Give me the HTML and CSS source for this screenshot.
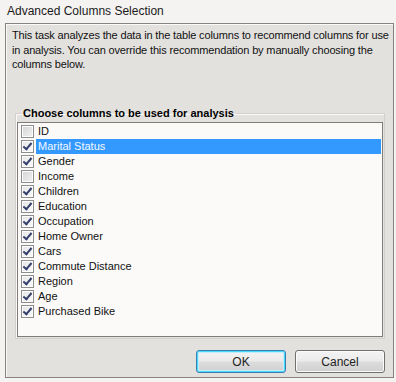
FILE: index.html
```html
<!DOCTYPE html>
<html>
<head>
<meta charset="utf-8">
<link rel="stylesheet" href="styles.css">
</head>
<body>
<div class="title">Advanced Columns Selection</div>
<div class="dialog">
  <p class="desc">This task analyzes the data in the table columns to recommend columns for use in analysis. You can override this recommendation by manually choosing the columns below.</p>
  <fieldset class="group">
    <legend>Choose columns to be used for analysis</legend>
    <ul class="list">
      <li class="item"><span class="cb"></span><span class="lbl">ID</span></li>
      <li class="item sel"><span class="cb on"></span><span class="lbl">Marital Status</span></li>
      <li class="item"><span class="cb on"></span><span class="lbl">Gender</span></li>
      <li class="item"><span class="cb"></span><span class="lbl">Income</span></li>
      <li class="item"><span class="cb on"></span><span class="lbl">Children</span></li>
      <li class="item"><span class="cb on"></span><span class="lbl">Education</span></li>
      <li class="item"><span class="cb on"></span><span class="lbl">Occupation</span></li>
      <li class="item"><span class="cb on"></span><span class="lbl">Home Owner</span></li>
      <li class="item"><span class="cb on"></span><span class="lbl">Cars</span></li>
      <li class="item"><span class="cb on"></span><span class="lbl">Commute Distance</span></li>
      <li class="item"><span class="cb on"></span><span class="lbl">Region</span></li>
      <li class="item"><span class="cb on"></span><span class="lbl">Age</span></li>
      <li class="item"><span class="cb on"></span><span class="lbl">Purchased Bike</span></li>
    </ul>
  </fieldset>
  <div class="buttons">
    <button class="btn default">OK</button>
    <button class="btn">Cancel</button>
  </div>
</div>
</body>
</html>
```
FILE: styles.css
```css
html, body {
  margin: 0;
  padding: 0;
}
body {
  width: 396px;
  height: 382px;
  background: #f4f3f2;
  font-family: "Liberation Sans", Arial, sans-serif;
  font-size: 11px;
  color: #111;
  overflow: hidden;
}
.title {
  height: 23px;
  line-height: 22px;
  padding-left: 7px;
  font-size: 12px;
  color: #1a1a1a;
}
.dialog {
  margin-left: 5px;
  width: 387px;
  height: 353px;
  border: 1px solid #86827e;
  box-shadow: inset 1px 1px 0 #fbfaf9;
  background: #e3e1de;
  display: flex;
  flex-direction: column;
}
.desc {
  margin: 4px 3px 0 6px;
  line-height: 14.5px;
  font-size: 11px;
  letter-spacing: -0.15px;
  height: 79px;
}
.group {
  margin: 0 8px 0 9px;
  padding: 0 1px 1px 1px;
  border: 1px solid #d3d0cc;
  box-shadow: 1px 1px 0 #faf9f8 inset;
}
.group legend {
  margin-left: 4px;
  padding: 0 2px;
  font-weight: bold;
  font-size: 11px;
  line-height: 13px;
  color: #000;
}
.list {
  list-style: none;
  margin: 2px 0 0 0;
  padding: 1px 1px;
  height: 211px;
  border: 1px solid #7f7c79;
  background: #fbfaf8;
}
.item {
  display: flex;
  align-items: center;
  height: 15px;
  padding-left: 2px;
}
.cb {
  width: 11px;
  height: 11px;
  flex: none;
  border: 1px solid #8e8e8e;
  background: linear-gradient(135deg, #d4d4d4, #f2f2f2);
  box-shadow: inset 0 0 0 1px #fdfdfd;
  position: relative;
}
.cb.on {
  background: linear-gradient(135deg, #e6e6e6, #fafafa);
}
.cb.on::after {
  content: "";
  position: absolute;
  left: 3px;
  top: 0px;
  width: 3px;
  height: 7px;
  border: solid #34406b;
  border-width: 0 2px 2px 0;
  transform: rotate(40deg);
}
.lbl {
  margin-left: 2px;
  padding: 0 2px;
  height: 15px;
  line-height: 15px;
  flex: 1;
  color: #111;
}
.sel .lbl {
  background: #3399ff;
  color: #f4f8ff;
}
.buttons {
  display: flex;
  justify-content: flex-end;
  gap: 9px;
  margin: 11px 8px 0 0;
}
.btn {
  width: 90px;
  height: 23px;
  font-family: "Liberation Sans", Arial, sans-serif;
  font-size: 12px;
  color: #222;
  border: 1px solid #707070;
  border-radius: 3px;
  background: linear-gradient(#f3f3f3 0%, #ebebeb 48%, #dddddd 52%, #cfcfcf 100%);
  box-shadow: inset 0 0 0 1px #fbfbfb;
  padding: 0;
}
.btn.default {
  border-color: #3c7fb1;
  box-shadow: inset 0 0 0 1px #48d8fb, inset 0 0 0 2px #c0eefc;
}
```
